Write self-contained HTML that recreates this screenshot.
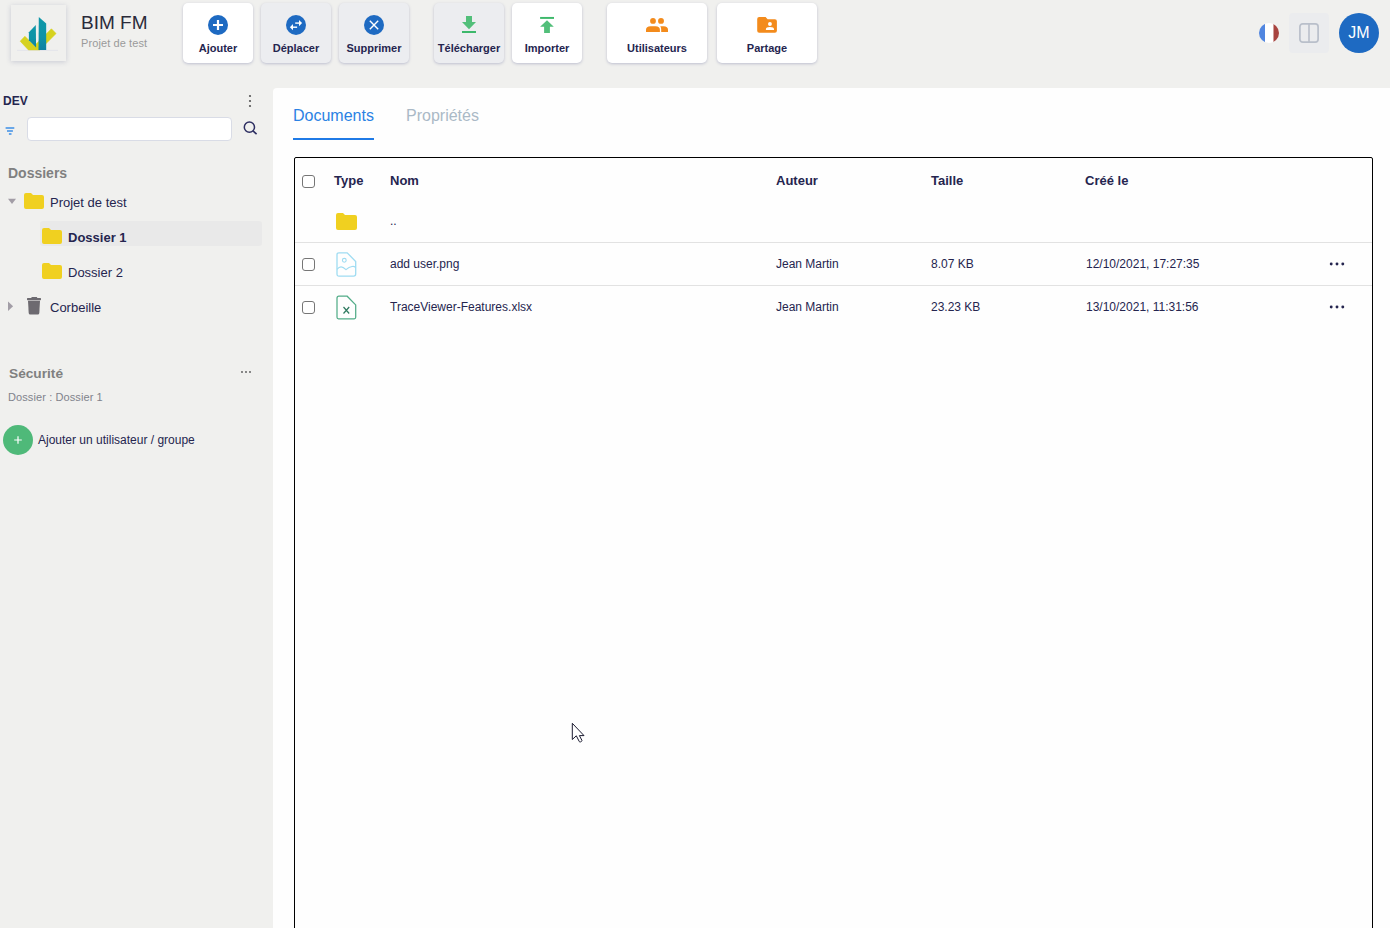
<!DOCTYPE html>
<html><head><meta charset="utf-8">
<style>
*{box-sizing:border-box;margin:0;padding:0}
html,body{width:1390px;height:928px;overflow:hidden}
body{background:#f0f0ee;font-family:"Liberation Sans",sans-serif;color:#25254f;position:relative}
.a{position:absolute}
.logo{left:11px;top:5px;width:55px;height:56px;background:#f0f0ee;box-shadow:0 1px 5px rgba(60,70,120,.22)}
.title{left:81px;top:12px;font-size:19px;color:#2b2b3a;white-space:nowrap}
.sub{left:81px;top:37px;font-size:11px;letter-spacing:0.1px;color:#9a9a9a;white-space:nowrap}
.btn{top:3px;height:60px;border-radius:5px;background:#fff;box-shadow:0 1px 3px rgba(60,70,130,.28)}
.btn.g{background:#ecedf0}
.btn .ic{position:absolute;left:50%;top:12px;width:20px;height:20px;margin-left:-10px}
.btn .lb{position:absolute;left:0;right:0;top:39px;text-align:center;font-size:11px;font-weight:bold;color:#25254f;white-space:nowrap}
.panel{left:273px;top:88px;width:1117px;height:840px;background:#fefefe;border-top-left-radius:4px}
.tbl{left:294px;top:157px;width:1079px;height:790px;border:1px solid #000;border-radius:2px}
.th{top:173px;font-size:13px;font-weight:bold;color:#25254f;white-space:nowrap}
.td{font-size:12px;color:#25254f;white-space:nowrap}
.cb{width:13px;height:13px;border:1px solid #767676;border-radius:3px;background:#fff}
.hr{left:295px;width:1077px;height:1px;background:#e2e2e2}
.side{font-size:13px;color:#25254f;white-space:nowrap}
</style></head><body>
<!-- header -->
<div class="a logo">
<svg width="55" height="56" viewBox="0 0 55 56">
<defs><linearGradient id="tg" x1="0" y1="0" x2="0" y2="1"><stop offset="0" stop-color="#0f97a9"/><stop offset="0.6" stop-color="#0e93a6"/><stop offset="1" stop-color="#0f80a2"/></linearGradient></defs>
<line x1="6" y1="45.4" x2="47" y2="45.4" stroke="#dfe1ea" stroke-width="0.8"/>
<polygon points="9.2,36.2 13.9,31.3 23.4,40.8 40.4,23.8 45.1,28.5 28.7,44.9 17.4,44.9" fill="#d6d21e" stroke="#d6d21e" stroke-width="0.6" stroke-linejoin="round"/>
<polygon points="17.9,27.3 24.8,20.1 25.1,42.4 17.9,35.3" fill="url(#tg)"/>
<polygon points="27.8,11.9 35.2,18.4 35.2,44.9 27.5,44.9" fill="url(#tg)"/>
</svg>
</div>
<div class="a title">BIM FM</div>
<div class="a sub">Projet de test</div>

<div class="a btn" style="left:183px;width:70px">
 <svg class="ic" viewBox="0 0 20 20"><circle cx="10" cy="10" r="10" fill="#1e6ac2"/><path d="M10 5v10M5 10h10" stroke="#fff" stroke-width="2.2"/></svg>
 <div class="lb">Ajouter</div></div>
<div class="a btn g" style="left:261px;width:70px">
 <svg class="ic" viewBox="0 0 20 20"><circle cx="10" cy="10" r="10" fill="#1e6ac2"/><rect x="9.2" y="7.4" width="4.2" height="1.4" fill="#fff"/><path d="M13 5L16.1 8.1 13 11.2z" fill="#fff"/><rect x="6.8" y="11.5" width="4.3" height="1.4" fill="#fff"/><path d="M7 8.9L3.9 12.2 7 15.3z" fill="#fff"/></svg>
 <div class="lb">Déplacer</div></div>
<div class="a btn g" style="left:339px;width:70px">
 <svg class="ic" viewBox="0 0 20 20"><circle cx="10" cy="10" r="10" fill="#1e6ac2"/><path d="M5.8 5.8l8.4 8.4M14.2 5.8l-8.4 8.4" stroke="#fff" stroke-width="1.4"/></svg>
 <div class="lb">Supprimer</div></div>

<div class="a btn g" style="left:434px;width:70px">
 <svg class="ic" viewBox="0 0 20 20"><path d="M7 1h6v6.1h4l-7 7.1-7-7.1h4z" fill="#52bf7a"/><rect x="3" y="16" width="14" height="2" fill="#3db86b"/></svg>
 <div class="lb">Télécharger</div></div>
<div class="a btn" style="left:512px;width:70px">
 <svg class="ic" viewBox="0 0 20 20"><rect x="3.1" y="1.95" width="13.9" height="1.95" fill="#3db86b"/><path d="M10 5.2l6.8 6.45h-3.9V18H7.1v-6.35H3.1z" fill="#52bf7a"/></svg>
 <div class="lb">Importer</div></div>

<div class="a btn" style="left:607px;width:100px">
 <svg class="ic" viewBox="0 0 20 20" style="overflow:visible"><circle cx="6" cy="5.9" r="2.9" fill="#f38b1c"/><circle cx="14" cy="5.9" r="2.95" fill="#f38b1c"/><path d="M-1 17v-2.2q0-3.6 4.5-3.6h5q4.4 0 4.4 3.6V17z" fill="#f38b1c"/><path d="M13.3 11.2h3.2q4.5 0 4.5 3.6V17h-6.8v-2.5q0-2-0.9-3.3z" fill="#f38b1c"/></svg>
 <div class="lb">Utilisateurs</div></div>
<div class="a btn" style="left:717px;width:100px">
 <svg class="ic" viewBox="0 0 20 20"><path d="M0.2 4q0-2 2-2h6.4l2 2.2h7.3q2 0 2 2v9.6q0 2-2 2H2.2q-2 0-2-2z" fill="#f38b1c"/><circle cx="12.95" cy="8.95" r="1.95" fill="#fff"/><path d="M8.9 14.9v-0.6q0-2.3 4.05-2.3t4.05 2.3v0.6z" fill="#fff"/></svg>
 <div class="lb">Partage</div></div>

<svg class="a" style="left:1259px;top:23px" width="20" height="20" viewBox="0 0 20 20">
<defs><clipPath id="fc"><circle cx="10" cy="10" r="10"/></clipPath></defs>
<g clip-path="url(#fc)"><rect x="0" y="0" width="6" height="20" fill="#5186e0"/><rect x="6" y="0" width="8.5" height="20" fill="#fff"/><rect x="14.5" y="0" width="6" height="20" fill="#a8443f"/></g></svg>
<div class="a" style="left:1289px;top:13px;width:40px;height:40px;background:#ebecee;border-radius:4px"></div>
<svg class="a" style="left:1299px;top:23px" width="20" height="20" viewBox="0 0 20 20"><rect x="0.9" y="0.9" width="18.2" height="18.2" rx="2.8" fill="none" stroke="#b9bfca" stroke-width="1.7"/><path d="M10 1v18" stroke="#b9bfca" stroke-width="1.6"/></svg>
<div class="a" style="left:1339px;top:13px;width:40px;height:40px;border-radius:50%;background:#1e6ac2;color:#fff;font-size:16px;line-height:40px;text-align:center">JM</div>

<!-- sidebar -->
<div class="a side" style="left:3px;top:94px;font-size:12px;font-weight:bold">DEV</div>
<svg class="a" style="left:246px;top:93px" width="8" height="16" viewBox="0 0 8 16"><circle cx="4" cy="3" r="1.1" fill="#555"/><circle cx="4" cy="8" r="1.1" fill="#555"/><circle cx="4" cy="13" r="1.1" fill="#555"/></svg>
<svg class="a" style="left:5px;top:126px" width="10" height="10" viewBox="0 0 10 10"><path d="M0.6 1.9h8.7M2 4.9h5.9M3.9 7.9h2.6" stroke="#3d8ee6" stroke-width="1.5"/></svg>
<div class="a" style="left:27px;top:117px;width:205px;height:24px;background:#fff;border:1px solid #d9dce6;border-radius:4px"></div>
<svg class="a" style="left:242px;top:121px" width="16" height="15" viewBox="0 0 16 15"><circle cx="7.4" cy="6.2" r="5.1" stroke="#2e2f62" stroke-width="1.5" fill="none"/><path d="M11 9.9l3.6 3.3" stroke="#2e2f62" stroke-width="1.6"/></svg>

<div class="a" style="left:8px;top:165px;font-size:14px;font-weight:bold;color:#808080">Dossiers</div>
<svg class="a" style="left:7px;top:198px" width="10" height="7" viewBox="0 0 10 7"><path d="M1 0.8h8L5 5.9z" fill="#a29da6"/></svg>
<svg class="a folder" style="left:24px;top:193px" width="20" height="16" viewBox="0 0 20 16"><path d="M0 2q0-2 2-2h5l2 2h9q2 0 2 2v10q0 2-2 2H2q-2 0-2-2z" fill="#f0d020"/></svg>
<div class="a side" style="left:50px;top:195px;font-size:13px">Projet de test</div>

<div class="a" style="left:40px;top:221px;width:222px;height:25px;background:#e9e9e9;border-radius:3px"></div>
<svg class="a" style="left:42px;top:228px" width="20" height="16" viewBox="0 0 20 16"><path d="M0 2q0-2 2-2h5l2 2h9q2 0 2 2v10q0 2-2 2H2q-2 0-2-2z" fill="#f0d020"/></svg>
<div class="a side" style="left:68px;top:230px;font-size:13px;font-weight:bold">Dossier 1</div>
<svg class="a" style="left:42px;top:263px" width="20" height="16" viewBox="0 0 20 16"><path d="M0 2q0-2 2-2h5l2 2h9q2 0 2 2v10q0 2-2 2H2q-2 0-2-2z" fill="#f0d020"/></svg>
<div class="a side" style="left:68px;top:265px;font-size:13px">Dossier 2</div>

<svg class="a" style="left:8px;top:301px" width="6" height="10" viewBox="0 0 6 10"><path d="M0 0.4v9.5l5.1-4.75z" fill="#a29da6"/></svg>
<svg class="a" style="left:27px;top:297px" width="14" height="18" viewBox="0 0 14 18"><rect x="0" y="1.1" width="14" height="2.1" rx="0.6" fill="#6d6a70"/><rect x="4.4" y="0" width="5.8" height="1.6" rx="0.5" fill="#6d6a70"/><path d="M1 3.8h12l-0.7 12.2q-0.1 1.5-1.6 1.5H3.3q-1.5 0-1.6-1.5z" fill="#6d6a70"/></svg>
<div class="a side" style="left:50px;top:300px;font-size:13px">Corbeille</div>

<div class="a" style="left:9px;top:366px;font-size:13.7px;font-weight:bold;color:#808080">Sécurité</div>
<svg class="a" style="left:240px;top:370px" width="12" height="4" viewBox="0 0 12 4"><circle cx="2" cy="2" r="0.9" fill="#555"/><circle cx="6" cy="2" r="0.9" fill="#555"/><circle cx="10" cy="2" r="0.9" fill="#555"/></svg>
<div class="a" style="left:8px;top:391px;font-size:11px;letter-spacing:0.1px;color:#80838c">Dossier : Dossier 1</div>
<div class="a" style="left:3px;top:425px;width:30px;height:30px;border-radius:50%;background:#4fb979"></div>
<svg class="a" style="left:13px;top:434.5px" width="10" height="10" viewBox="0 0 10 10"><path d="M5 1.2v7.6M1.2 5h7.6" stroke="#fff" stroke-width="1.2"/></svg>
<div class="a side" style="left:38px;top:433px;font-size:12px">Ajouter un utilisateur / groupe</div>

<!-- main -->
<div class="a panel"></div>
<div class="a" style="left:293px;top:107px;font-size:16px;color:#2a82e4">Documents</div>
<div class="a" style="left:293px;top:138px;width:81px;height:2px;background:#1f7ae6"></div>
<div class="a" style="left:406px;top:107px;font-size:16px;color:#aab9c6">Propriétés</div>

<div class="a tbl"></div>
<div class="a cb" style="left:302px;top:175px"></div>
<div class="a th" style="left:334px">Type</div>
<div class="a th" style="left:390px">Nom</div>
<div class="a th" style="left:776px">Auteur</div>
<div class="a th" style="left:931px">Taille</div>
<div class="a th" style="left:1085px">Créé le</div>

<svg class="a" style="left:336px;top:213px" width="21" height="17" viewBox="0 0 21 17"><path d="M0 2q0-2 2-2h5l2 2h10q2 0 2 2v11q0 2-2 2H2q-2 0-2-2z" fill="#f0d020"/></svg>
<div class="a td" style="left:390px;top:214px">..</div>
<div class="a hr" style="top:242px"></div>

<div class="a cb" style="left:302px;top:258px"></div>
<svg class="a" style="left:336px;top:252px" width="21" height="25" viewBox="0 0 21 25"><path d="M3 0.8h8.2l8.5 8.7v12.6q0 2-2 2H3q-2 0-2-2V2.8q0-2 2-2z" fill="none" stroke="#9fdcf2" stroke-width="1.3"/><circle cx="8.3" cy="8.3" r="1.9" fill="none" stroke="#9fdcf2" stroke-width="1.1"/><path d="M1 17.3Q3 15 5 14.9T10 17.7Q13 15 16 14.5T19.7 16" fill="none" stroke="#9fdcf2" stroke-width="1.1"/></svg>
<div class="a td" style="left:390px;top:257px">add user.png</div>
<div class="a td" style="left:776px;top:257px">Jean Martin</div>
<div class="a td" style="left:931px;top:257px">8.07 KB</div>
<div class="a td" style="left:1086px;top:257px">12/10/2021, 17:27:35</div>
<svg class="a" style="left:1329px;top:262px" width="17" height="4" viewBox="0 0 17 4"><circle cx="2.2" cy="2" r="1.45" fill="#25254f"/><circle cx="8" cy="2" r="1.45" fill="#25254f"/><circle cx="13.8" cy="2" r="1.45" fill="#25254f"/></svg>
<div class="a hr" style="top:285px"></div>

<div class="a cb" style="left:302px;top:301px"></div>
<svg class="a" style="left:336px;top:295px" width="21" height="25" viewBox="0 0 21 25"><path d="M3 1.2h8.2l8.5 8.7v12.4q0 1.5-1.5 1.5H2.5q-1.5 0-1.5-1.5V3.2q0-2 2-2z" fill="none" stroke="#52ac88" stroke-width="1.25"/><path d="M7.5 12l5.7 6.5M13.2 12l-5.7 6.5" stroke="#2f7a60" stroke-width="1.2"/></svg>
<div class="a td" style="left:390px;top:300px">TraceViewer-Features.xlsx</div>
<div class="a td" style="left:776px;top:300px">Jean Martin</div>
<div class="a td" style="left:931px;top:300px">23.23 KB</div>
<div class="a td" style="left:1086px;top:300px">13/10/2021, 11:31:56</div>
<svg class="a" style="left:1329px;top:305px" width="17" height="4" viewBox="0 0 17 4"><circle cx="2.2" cy="2" r="1.45" fill="#25254f"/><circle cx="8" cy="2" r="1.45" fill="#25254f"/><circle cx="13.8" cy="2" r="1.45" fill="#25254f"/></svg>

<!-- cursor -->
<svg class="a" style="left:571px;top:722px" width="14" height="22" viewBox="0 0 14 22"><path d="M1.3 1.3V17.5L5.3 13.8L8.3 19.6Q8.8 20.2 9.5 19.9L10.6 19.3Q11.1 18.9 10.9 18.3L8.4 13.6H13Z" fill="#fff" stroke="#1a1a30" stroke-width="1" stroke-linejoin="round"/></svg>
</body></html>
